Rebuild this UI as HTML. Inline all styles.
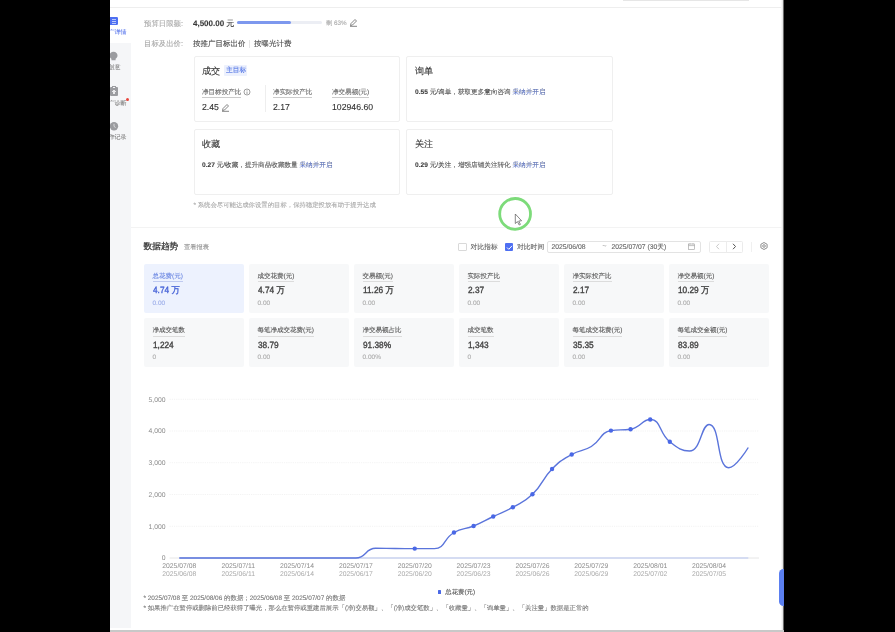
<!DOCTYPE html>
<html><head><meta charset="utf-8">
<style>
*{margin:0;padding:0;box-sizing:border-box}
html,body{width:895px;height:632px;overflow:hidden;background:#000}
body{font-family:"Liberation Sans",sans-serif;position:relative;color:#333;text-rendering:geometricPrecision;-webkit-text-stroke-width:0.1px}
.a{position:absolute;white-space:nowrap;line-height:1}
#page{position:absolute;left:110px;top:0;width:674px;height:632px;background:#fff}
.lbl{color:#a8a8a8;font-size:8px}
.card{position:absolute;border:1px solid #efefef;border-radius:2px;background:#fff}
.ct{font-size:9.1px;color:#333}
.tip{font-size:6.6px;color:#555;-webkit-text-stroke:0.1px #555}
.lnk{color:#5b7be8}
.m{position:absolute;width:100px;height:49px;background:#f7f8f9;border-radius:2px}
.m .l{position:absolute;left:8.5px;top:9.2px;font-size:6.5px;color:#555;border-bottom:1px solid #dcdcdc;line-height:8.6px;white-space:nowrap}
.m .v{position:absolute;left:8.5px;top:22.9px;font-size:9px;color:#454545;-webkit-text-stroke:0.38px #454545;white-space:nowrap;line-height:1;transform:scaleX(0.92);transform-origin:0 0}
.m .s{position:absolute;left:8.5px;top:37px;font-size:6.5px;color:#aaa;line-height:1}
.ax{font-size:6.8px;color:#888}
</style></head><body>
<div id="wrap" style="position:absolute;left:0;top:0;width:895px;height:632px;filter:blur(0.3px)">
<div id="page"></div>
<!-- top line -->
<div class="a" style="left:110px;top:7px;width:672px;height:1px;background:#eeeeee"></div>
<div class="a" style="left:623px;top:0;width:126px;height:1px;background:#e6e6e6"></div>
<div class="a" style="left:781px;top:0;width:1px;height:632px;background:#f6f6f6"></div><div class="a" style="left:782px;top:0;width:1px;height:632px;background:#e6e6e6"></div><div class="a" style="left:783px;top:0;width:1px;height:632px;background:#6a6a6a"></div>
<!-- sidebar -->
<div class="a" style="left:110px;top:43px;width:20.6px;height:585px;background:#f5f6f8"></div>
<div class="a" style="left:109px;top:17px;width:9px;height:8px;background:#4e6ff2;border-radius:1.2px"></div>
<div class="a" style="left:111.5px;top:19.3px;width:4px;height:1px;background:#b9c8fa"></div>
<div class="a" style="left:111.5px;top:21.3px;width:4px;height:1px;background:#b9c8fa"></div>
<div class="a" style="left:111.5px;top:23.1px;width:4px;height:0.8px;background:#b9c8fa"></div>
<div class="a" style="left:102.5px;top:29.5px;font-size:6px;color:#6a84ee">推广详情</div>
<svg class="a" style="left:108px;top:51px" width="10" height="10" viewBox="0 0 10 10"><path d="M5.5 0.8 C8 0.8 9.5 2.6 9.5 4.6 C9.5 6.3 8.4 7.2 7.6 7.8 V9.2 H3.4 V7.8 C2.6 7.2 1.5 6.3 1.5 4.6 C1.5 2.6 3 0.8 5.5 0.8 Z" fill="#9b9ca0"/></svg>
<div class="a" style="left:108.5px;top:65.3px;font-size:6px;color:#8a8a8a">创意</div>
<div class="a" style="left:110px;top:86.8px;width:8px;height:9px;background:#9b9ca0;border-radius:1px"></div>
<div class="a" style="left:112px;top:85.8px;width:4px;height:2px;border:1px solid #9b9ca0;border-bottom:none;background:#f5f6f9"></div>
<div class="a" style="left:113.3px;top:89.5px;width:1.4px;height:4px;background:#e8e8ea"></div>
<div class="a" style="left:112px;top:90.8px;width:4px;height:1.4px;background:#e8e8ea"></div>
<div class="a" style="left:102.5px;top:100.5px;font-size:6px;color:#8a8a8a">推广诊断</div>
<div class="a" style="left:125.8px;top:97.5px;width:3.2px;height:3.2px;background:#e8453c;border-radius:50%"></div>
<svg class="a" style="left:109px;top:121px" width="10" height="10" viewBox="0 0 10 10"><circle cx="5" cy="5.2" r="4.2" fill="#9b9ca0"/><path d="M5 2.8 V5.4 L6.6 6.6" fill="none" stroke="#e6e6e8" stroke-width="0.8"/></svg>
<div class="a" style="left:102.5px;top:135px;font-size:6px;color:#8a8a8a">操作记录</div>
<!-- black overlay left to crop sidebar text -->
<div class="a" style="left:0;top:0;width:110px;height:632px;background:#000"></div>

<!-- budget row -->
<div class="a lbl" style="left:144px;top:20px;font-size:7.4px">预算日限额:</div>
<div class="a" style="left:193px;top:20px;font-size:8px;color:#3a3a3a"><b>4,500.00</b> 元</div>
<div class="a" style="left:236.5px;top:21px;width:85px;height:3px;background:#eceef4;border-radius:1.5px"></div>
<div class="a" style="left:236.5px;top:21px;width:54px;height:3px;background:#7d98ee;border-radius:1.5px"></div>
<div class="a" style="left:326px;top:20.5px;font-size:6.3px;color:#aaa">剩 63%</div>
<svg class="a" style="left:349px;top:18px" width="9" height="9" viewBox="0 0 9 9"><path d="M1.5 7.5 L2 5.5 L6 1.5 L7.5 3 L3.5 7 Z M1 8.3 H8" fill="none" stroke="#666" stroke-width="0.8"/></svg>
<div class="a lbl" style="left:144px;top:40px;font-size:7.4px">目标及出价:</div>
<div class="a" style="left:193px;top:40.3px;font-size:7.5px;color:#484848">按推广目标出价</div>
<div class="a" style="left:249px;top:39.5px;width:1px;height:8px;background:#e5e5e5"></div>
<div class="a" style="left:254px;top:40.3px;font-size:7.5px;color:#484848">按曝光计费</div>

<!-- cards -->
<div class="card" style="left:193.5px;top:55.5px;width:206px;height:66px"></div>
<div class="card" style="left:406px;top:55.5px;width:207px;height:66px"></div>
<div class="card" style="left:193.5px;top:128.5px;width:206px;height:66px"></div>
<div class="card" style="left:406px;top:128.5px;width:207px;height:66px"></div>

<div class="a ct" style="left:202px;top:67px">成交</div>
<div class="a" style="left:223.5px;top:64.5px;width:23px;height:11px;background:#edf1fd;border-radius:1px"></div>
<div class="a" style="left:226px;top:67.5px;font-size:6.8px;color:#5577e6">主目标</div>
<div class="a" style="left:202px;top:87.5px;font-size:6.55px;color:#666;border-bottom:1px solid #ccc;line-height:9px">净目标投产比</div>
<svg class="a" style="left:243px;top:88px" width="8" height="8" viewBox="0 0 8 8"><circle cx="4" cy="4" r="3" fill="none" stroke="#777" stroke-width="0.7"/><path d="M4 3.5V6M4 2.2V2.9" stroke="#777" stroke-width="0.7"/></svg>
<div class="a" style="left:202px;top:103px;font-size:8.7px;color:#333">2.45</div>
<svg class="a" style="left:220.5px;top:102.5px" width="9" height="9" viewBox="0 0 9 9"><path d="M1.5 7.5 L2 5.5 L6 1.5 L7.5 3 L3.5 7 Z M1 8.3 H8" fill="none" stroke="#666" stroke-width="0.8"/></svg>
<div class="a" style="left:265px;top:85px;width:1px;height:27px;background:#eee"></div>
<div class="a" style="left:273px;top:87.5px;font-size:6.55px;color:#666;border-bottom:1px solid #ccc;line-height:9px">净实际投产比</div>
<div class="a" style="left:273px;top:103px;font-size:8.7px;color:#333">2.17</div>
<div class="a" style="left:332px;top:87.5px;font-size:6.55px;color:#666;border-bottom:1px solid #ccc;line-height:9px">净交易额(元)</div>
<div class="a" style="left:332px;top:103px;font-size:8.7px;color:#333">102946.60</div>

<div class="a ct" style="left:415px;top:67px">询单</div>
<div class="a tip" style="left:415px;top:90px"><b style="font-weight:bold;color:#3a3a3a">0.55</b> <span style="color:#333">元/询单</span>，获取更多意向咨询 <span class="lnk">采纳并开启</span></div>
<div class="a ct" style="left:202px;top:140px">收藏</div>
<div class="a tip" style="left:202px;top:162.5px"><b style="font-weight:bold;color:#3a3a3a">0.27</b> <span style="color:#333">元/收藏</span>，提升商品收藏数量 <span class="lnk">采纳并开启</span></div>
<div class="a ct" style="left:415px;top:140px">关注</div>
<div class="a tip" style="left:415px;top:162.5px"><b style="font-weight:bold;color:#3a3a3a">0.29</b> <span style="color:#333">元/关注</span>，增强店铺关注转化 <span class="lnk">采纳并开启</span></div>

<div class="a" style="left:193.5px;top:202.5px;font-size:6.37px;color:#aaa">* 系统会尽可能达成你设置的目标，保持稳定投放有助于提升达成</div>

<!-- divider -->
<div class="a" style="left:131px;top:226.5px;width:651px;height:1px;background:#f3f3f3"></div>

<!-- trend header -->
<div class="a" style="left:143.5px;top:241.5px;font-size:8.7px;color:#3c3c3c;-webkit-text-stroke:0.3px #3c3c3c">数据趋势</div>
<div class="a" style="left:184px;top:244.5px;font-size:6.25px;color:#999;-webkit-text-stroke:0.1px #999">查看报表</div>
<div class="a" style="left:458px;top:242.5px;width:8.5px;height:8.5px;border:1px solid #d9d9d9;border-radius:1px;background:#fff"></div>
<div class="a" style="left:470.5px;top:244.5px;font-size:6.8px;color:#666">对比指标</div>
<div class="a" style="left:504.5px;top:242.5px;width:8.5px;height:8.5px;background:#4e6ff2;border-radius:1px"></div>
<svg class="a" style="left:504.5px;top:242.5px" width="9" height="9" viewBox="0 0 9 9"><path d="M2 4.5 L3.8 6.3 L7 2.8" fill="none" stroke="#fff" stroke-width="1"/></svg>
<div class="a" style="left:517px;top:244.5px;font-size:6.8px;color:#666">对比时间</div>
<div class="a" style="left:547px;top:240.5px;width:154px;height:12px;border:1px solid #e3e3e3;border-radius:2px"></div>
<div class="a" style="left:551.5px;top:245px;font-size:6.8px;color:#666">2025/06/08</div>
<div class="a" style="left:602.5px;top:244.2px;font-size:6.8px;color:#aaa">~</div>
<div class="a" style="left:611.5px;top:245px;font-size:6.8px;color:#666">2025/07/07 (30天)</div>
<svg class="a" style="left:688px;top:242.5px" width="7" height="7" viewBox="0 0 7 7"><rect x="0.5" y="1" width="6" height="5.5" fill="none" stroke="#999" stroke-width="0.6"/><path d="M0.5 2.6H6.5M2 0.3V1.5M5 0.3V1.5" stroke="#999" stroke-width="0.6"/></svg>
<div class="a" style="left:709px;top:240.5px;width:34px;height:12px;border:1px solid #ebebeb;border-radius:1.5px"></div>
<div class="a" style="left:725.5px;top:240.5px;width:1px;height:12px;background:#ececec"></div>
<svg class="a" style="left:715px;top:243px" width="6" height="7" viewBox="0 0 6 7"><path d="M4 0.8 L1.5 3.5 L4 6.2" fill="none" stroke="#bbb" stroke-width="0.8"/></svg>
<svg class="a" style="left:731px;top:243px" width="6" height="7" viewBox="0 0 6 7"><path d="M2 0.8 L4.5 3.5 L2 6.2" fill="none" stroke="#555" stroke-width="1"/></svg>
<div class="a" style="left:751px;top:241.5px;width:1px;height:10px;background:#f0f0f0"></div>
<svg class="a" style="left:760.3px;top:242.3px" width="8" height="8" viewBox="0 0 8 8"><path d="M4 0.5 L7.1 2.25 V5.75 L4 7.5 L0.9 5.75 V2.25 Z" fill="none" stroke="#7a7a7a" stroke-width="0.85" stroke-linejoin="round"/><circle cx="4" cy="4" r="1.3" fill="none" stroke="#7a7a7a" stroke-width="0.8"/></svg>

<!-- metrics -->
<div class="m" style="left:144px;top:263.5px;background:#edf2fe"><div class="l" style="color:#6a86e2;border-color:#bfcaf0">总花费(元)</div><div class="v" style="color:#4a66d8;-webkit-text-stroke-color:#4a66d8">4.74 万</div><div class="s" style="color:#9aabe8">0.00</div></div>
<div class="m" style="left:249px;top:263.5px"><div class="l">成交花费(元)</div><div class="v">4.74 万</div><div class="s">0.00</div></div>
<div class="m" style="left:354px;top:263.5px"><div class="l">交易额(元)</div><div class="v">11.26 万</div><div class="s">0.00</div></div>
<div class="m" style="left:459px;top:263.5px"><div class="l">实际投产比</div><div class="v">2.37</div><div class="s">0.00</div></div>
<div class="m" style="left:564px;top:263.5px"><div class="l">净实际投产比</div><div class="v">2.17</div><div class="s">0.00</div></div>
<div class="m" style="left:669px;top:263.5px"><div class="l">净交易额(元)</div><div class="v">10.29 万</div><div class="s">0.00</div></div>
<div class="m" style="left:144px;top:318px"><div class="l">净成交笔数</div><div class="v">1,224</div><div class="s">0</div></div>
<div class="m" style="left:249px;top:318px"><div class="l">每笔净成交花费(元)</div><div class="v">38.79</div><div class="s">0.00</div></div>
<div class="m" style="left:354px;top:318px"><div class="l">净交易额占比</div><div class="v">91.38%</div><div class="s">0.00%</div></div>
<div class="m" style="left:459px;top:318px"><div class="l">成交笔数</div><div class="v">1,343</div><div class="s">0</div></div>
<div class="m" style="left:564px;top:318px"><div class="l">每笔成交花费(元)</div><div class="v">35.35</div><div class="s">0.00</div></div>
<div class="m" style="left:669px;top:318px"><div class="l">每笔成交金额(元)</div><div class="v">83.89</div><div class="s">0.00</div></div>

<!-- chart -->
<svg class="a" style="left:0;top:0" width="895" height="632" viewBox="0 0 895 632">
<g stroke="#f0f0f0" stroke-width="0.8" stroke-dasharray="1.2 1">
<line x1="169.6" y1="399.3" x2="759" y2="399.3"/>
<line x1="169.6" y1="431" x2="759" y2="431"/>
<line x1="169.6" y1="462.7" x2="759" y2="462.7"/>
<line x1="169.6" y1="494.5" x2="759" y2="494.5"/>
<line x1="169.6" y1="526.3" x2="759" y2="526.3"/>
</g>
<line x1="169.6" y1="558" x2="759" y2="558" stroke="#e0e0e0" stroke-width="0.8"/>
<line x1="179.3" y1="558" x2="748.3" y2="558" stroke="#b8c6f2" stroke-width="1.2"/>
<path d="M179.30 558.00 C179.30 558.00 189.11 558.00 198.92 558.00 C208.73 558.00 208.73 558.00 218.54 558.00 C228.35 558.00 228.35 558.00 238.16 558.00 C247.97 558.00 247.97 558.00 257.78 558.00 C267.59 558.00 267.59 558.00 277.40 558.00 C287.21 558.00 287.21 558.00 297.02 558.00 C306.83 558.00 306.83 558.00 316.64 558.00 C326.45 558.00 326.45 558.00 336.26 558.00 C346.07 558.00 346.61 558.00 355.88 558.00 C366.23 558.00 365.15 548.30 375.50 548.30 C384.77 548.30 385.31 548.42 395.12 548.50 C404.93 548.57 404.93 548.60 414.74 548.60 C424.55 548.60 425.81 548.60 434.36 548.60 C445.43 548.60 443.17 538.73 453.98 532.50 C462.79 527.43 464.05 529.89 473.60 526.00 C483.67 521.89 483.39 521.21 493.22 516.50 C503.01 511.81 503.41 512.53 512.84 507.20 C523.03 501.43 524.16 502.38 532.46 494.30 C543.78 483.28 540.94 480.29 552.08 469.00 C560.56 460.39 561.20 460.52 571.70 454.50 C580.82 449.27 582.37 451.95 591.32 446.50 C601.99 440.00 599.91 432.40 610.94 430.60 C619.53 429.20 621.27 430.60 630.56 429.20 C640.89 427.64 641.86 419.50 650.18 419.50 C661.48 419.50 658.46 432.69 669.80 441.80 C678.08 448.44 681.64 451.00 689.42 451.00 C701.26 451.00 701.00 424.50 709.04 424.50 C720.62 424.50 716.35 467.80 728.66 467.80 C735.97 467.80 748.28 447.50 748.28 447.50" fill="none" stroke="#5a74db" stroke-width="1.4"/>
<g fill="#4a68e6"><circle cx="414.74" cy="548.6" r="2.2"/><circle cx="453.98" cy="532.5" r="2.2"/><circle cx="473.60" cy="526" r="2.2"/><circle cx="493.22" cy="516.5" r="2.2"/><circle cx="512.84" cy="507.2" r="2.2"/><circle cx="532.46" cy="494.3" r="2.2"/><circle cx="552.08" cy="469" r="2.2"/><circle cx="571.70" cy="454.5" r="2.2"/><circle cx="610.94" cy="430.6" r="2.2"/><circle cx="630.56" cy="429.2" r="2.2"/><circle cx="650.18" cy="419.5" r="2.2"/><circle cx="669.80" cy="441.8" r="2.2"/></g>
<g font-family="Liberation Sans" font-size="6.8" fill="#8c8c8c" text-anchor="end">
<text x="165.5" y="401.5">5,000</text>
<text x="165.5" y="433.2">4,000</text>
<text x="165.5" y="465">3,000</text>
<text x="165.5" y="496.8">2,000</text>
<text x="165.5" y="528.5">1,000</text>
<text x="165.5" y="560.3">0</text>
</g>
<g font-family="Liberation Sans" font-size="6.8" text-anchor="middle">
<g fill="#8c8c8c">
<text x="179.3" y="567.5">2025/07/08</text><text x="238.2" y="567.5">2025/07/11</text><text x="297.0" y="567.5">2025/07/14</text><text x="355.9" y="567.5">2025/07/17</text><text x="414.7" y="567.5">2025/07/20</text><text x="473.6" y="567.5">2025/07/23</text><text x="532.5" y="567.5">2025/07/26</text><text x="591.3" y="567.5">2025/07/29</text><text x="650.2" y="567.5">2025/08/01</text><text x="709.0" y="567.5">2025/08/04</text>
</g>
<g fill="#aaa">
<text x="179.3" y="576">2025/06/08</text><text x="238.2" y="576">2025/06/11</text><text x="297.0" y="576">2025/06/14</text><text x="355.9" y="576">2025/06/17</text><text x="414.7" y="576">2025/06/20</text><text x="473.6" y="576">2025/06/23</text><text x="532.5" y="576">2025/06/26</text><text x="591.3" y="576">2025/06/29</text><text x="650.2" y="576">2025/07/02</text><text x="709.0" y="576">2025/07/05</text>
</g>
</g>
</svg>
<div class="a" style="left:438px;top:589.5px;width:3.2px;height:4.2px;background:#4a68e6;border-radius:0.5px"></div>
<div class="a" style="left:445.3px;top:589.5px;font-size:6.4px;color:#555">总花费(元)</div>

<div class="a" style="left:143.5px;top:596px;font-size:6.45px;color:#777">* 2025/07/08 至 2025/08/06 的数据；2025/06/08 至 2025/07/07 的数据</div>
<div class="a" style="left:143.5px;top:606px;font-size:6.37px;color:#777">* 如果推广在暂停或删除前已经获得了曝光，那么在暂停或重建后展示「(净)交易额」、「(净)成交笔数」、「收藏量」、「询单量」、「关注量」数据是正常的</div>

<!-- right blue tab -->

<!-- bottom bar -->
<div class="a" style="left:110px;top:630px;width:674px;height:2px;background:#c8c8c8"></div>
<!-- cursor -->
<svg class="a" style="left:0;top:0" width="895" height="632" viewBox="0 0 895 632"><circle cx="515.1" cy="213.9" r="15.4" fill="none" stroke="#7ddb7a" stroke-width="2.8"/><path d="M515.3 214 V223.5 L517.4 221.6 L519.2 225 L520.4 224.4 L518.7 221 L521.6 220.8 Z" fill="#fff" stroke="#555" stroke-width="0.7"/></svg>
<div class="a" style="left:779px;top:569px;width:5px;height:36.5px;background:#5b7ff0;border-radius:4.5px 0 0 4.5px"></div>
</div>
</body></html>
